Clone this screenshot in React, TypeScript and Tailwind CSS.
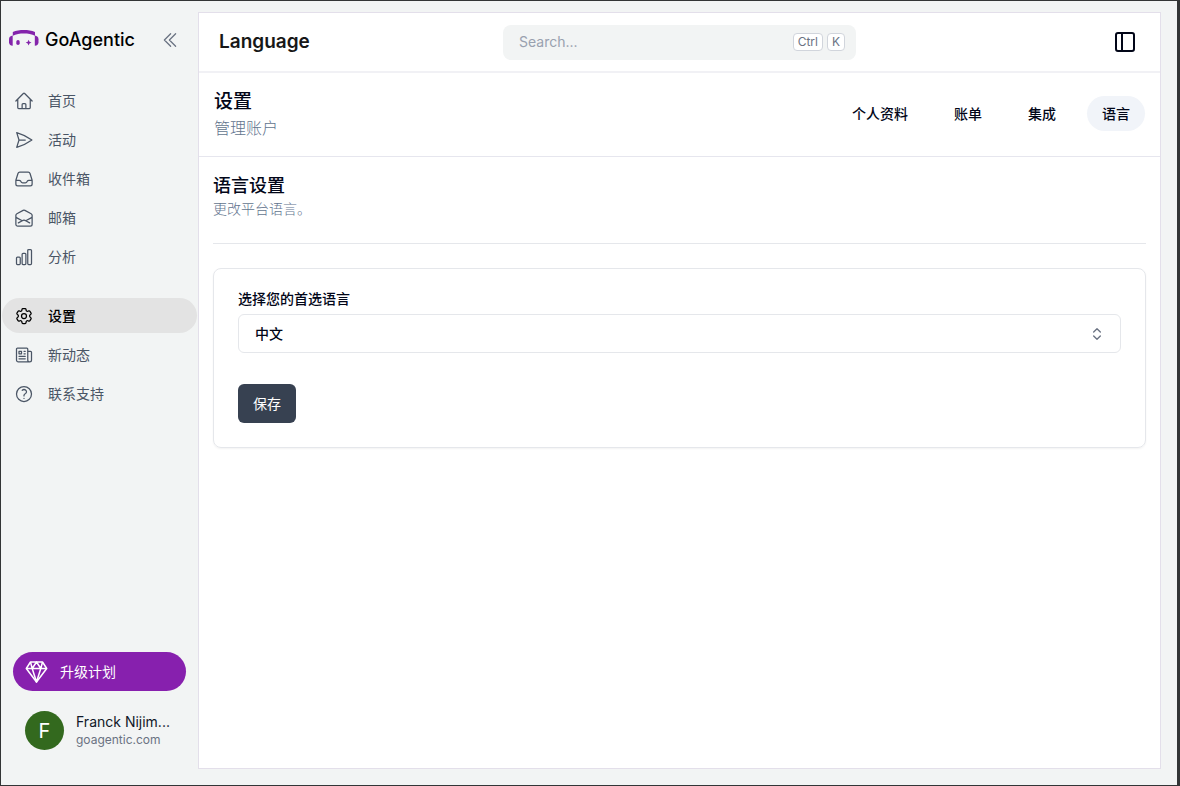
import {
  HiOutlineHome,
  HiOutlinePaperAirplane,
  HiOutlineInbox,
  HiOutlineEnvelopeOpen,
  HiOutlineChartBar,
  HiOutlineCog6Tooth,
  HiOutlineNewspaper,
  HiOutlineQuestionMarkCircle,
  HiOutlineChevronDoubleLeft
} from 'react-icons/hi2';
import { ChevronsUpDown } from 'lucide-react';
import React, { useState } from 'react';

type NavId = 'home' | 'campaigns' | 'inbox' | 'mailboxes' | 'analytics' | 'settings' | 'news' | 'support';

interface NavItem {
  id: NavId;
  icon: React.ComponentType<{ size?: number; className?: string }>;
  label: string;
}

const mainNav: NavItem[] = [
  { id: 'home', icon: HiOutlineHome, label: '首页' },
  { id: 'campaigns', icon: HiOutlinePaperAirplane, label: '活动' },
  { id: 'inbox', icon: HiOutlineInbox, label: '收件箱' },
  { id: 'mailboxes', icon: HiOutlineEnvelopeOpen, label: '邮箱' },
  { id: 'analytics', icon: HiOutlineChartBar, label: '分析' },
];

const secondaryNav: NavItem[] = [
  { id: 'settings', icon: HiOutlineCog6Tooth, label: '设置' },
  { id: 'news', icon: HiOutlineNewspaper, label: '新动态' },
  { id: 'support', icon: HiOutlineQuestionMarkCircle, label: '联系支持' },
];

const tabs = ['个人资料', '账单', '集成', '语言'];

const Logo = () => (
  <svg width="30" height="22" viewBox="0 0 30 22" fill="#8424ab" aria-hidden="true">
    <path d="M3.800 3C7 1.500 11 1 14.900 1s7.900.5 11.100 2v3.700C22.800 5.200 19 4.600 14.900 4.600S7 5.200 3.800 6.700z" />
    <path d="M3.700 6.500v10.300C1.300 16.500 0 15.200 0 13.200v-3c0-2 1.300-3.400 3.700-3.700z" />
    <path d="M25.800 6.500v10.300c2.400-.3 3.700-1.600 3.700-3.600v-3c0-2-1.300-3.400-3.700-3.700z" />
    <rect x="7.300" y="11" width="3.400" height="5" rx="1.700" />
    <path d="M19.600 10.700l.9 2 2 .9-2 .9-.9 2-.9-2-2-.9 2-.9z" />
  </svg>
);

const DiamondIcon = () => (
  <svg width="23" height="24" viewBox="0 0 23 24" fill="none" stroke="currentColor" strokeWidth="1.500" strokeLinejoin="round" aria-hidden="true">
    <path d="M5.500 2h12l4.200 6.500L11.500 22 1.300 8.500z" />
    <path d="M1.300 8.500h20.400M5.500 2l1.700 6.500L11.500 2l4.300 6.500L17.500 2M7.200 8.500L11.500 22l4.300-13.500" />
  </svg>
);

const PanelIcon = () => (
  <svg width="24" height="24" viewBox="0 0 24 24" fill="none" stroke="currentColor" strokeWidth="2" strokeLinejoin="round" aria-hidden="true">
    <rect x="3" y="3" width="18" height="18" rx="2" />
    <path d="M9 3v18" />
  </svg>
);

const Sidebar = () => {
  const [activeView, setActiveView] = useState<NavId>('settings');

  const Item = ({ id, icon: Icon, label }: NavItem) => (
    <button
      onClick={() => setActiveView(id)}
      className={`w-full h-[35px] flex items-center gap-3.5 px-3 rounded-full text-sm ${activeView === id
        ? 'bg-[#e3e3e3] text-black font-medium'
        : 'text-gray-600 hover:bg-gray-200'
        }`}
    >
      <Icon size={20} className="shrink-0" />
      <span>{label}</span>
    </button>
  );

  return (
    <aside className="w-[197px] shrink-0 flex flex-col">
      {/* Brand */}
      <div className="flex items-center justify-between pl-2 pr-[18px] pt-6 h-[54px]">
        <a href="#" className="flex items-center gap-1.5">
          <Logo />
          <span className="text-lg font-medium text-black">GoAgentic</span>
        </a>
        <button aria-label="Collapse sidebar" className="text-gray-500">
          <HiOutlineChevronDoubleLeft size={20} />
        </button>
      </div>

      <nav className="flex-1 mt-7 px-px">
        <div className="space-y-1">
          {mainNav.map(item => (
            <Item key={item.id} {...item} />
          ))}
        </div>
        <div className="mt-6 space-y-1">
          {secondaryNav.map(item => (
            <Item key={item.id} {...item} />
          ))}
        </div>
      </nav>

      <div className="px-3 pb-[35px]">
        <button className="w-full h-[39px] flex items-center gap-3 px-3 rounded-full bg-[#8720ae] text-white text-sm">
          <DiamondIcon />
          <span>升级计划</span>
        </button>

        {/* User info */}
        <div className="mt-5 flex items-center gap-3 px-3">
          <div className="w-[39px] h-[39px] shrink-0 rounded-full bg-[#33691e] text-white text-xl flex items-center justify-center">F</div>
          <div className="whitespace-nowrap">
            <p className="text-sm leading-[18px] text-gray-900">Franck Nijim...</p>
            <p className="text-xs leading-[18px] text-gray-500">goagentic.com</p>
          </div>
        </div>
      </div>
    </aside>
  );
};

const TopBar = () => (
  <header className="h-[60px] shrink-0 flex items-center justify-between pl-5 pr-[23px] border-b-2 border-[#f1f1f5]">
    <h1 className="flex-1 text-[19px] font-semibold text-neutral-900">Language</h1>
    <div className="w-[353px] h-[35px] ml-[3px] flex items-center gap-1 pl-4 pr-[11px] rounded-lg bg-[#f2f4f4]">
      <input
        type="search"
        aria-label="Search"
        placeholder="Search..."
        className="flex-1 min-w-0 bg-transparent text-sm placeholder:text-gray-400 outline-none"
      />
      <kbd className="h-[18px] px-1 flex items-center rounded border border-gray-300 bg-white font-[Inter] text-xs text-gray-500">Ctrl</kbd>
      <kbd className="h-[18px] px-1 flex items-center rounded border border-gray-300 bg-white font-[Inter] text-xs text-gray-500">K</kbd>
    </div>
    <div className="flex-1 flex justify-end">
      <button aria-label="Toggle panel" className="text-slate-950">
        <PanelIcon />
      </button>
    </div>
  </header>
);

const SettingsHeader = () => {
  const [activeTab, setActiveTab] = useState('语言');

  return (
    <div className="h-[84px] flex items-center justify-between px-[15px] pb-0.5 border-b border-[#e6e6ee]">
      <div>
        <h2 className="text-[19px] leading-7 font-medium text-slate-950">设置</h2>
        <p className="text-base leading-6 font-light text-slate-500">管理账户</p>
      </div>
      <nav className="flex gap-4">
        {tabs.map(tab => (
          <button
            key={tab}
            onClick={() => setActiveTab(tab)}
            className={`h-[35px] px-[15px] rounded-full text-sm font-medium text-slate-950 ${activeTab === tab ? 'bg-[#f1f4f9]' : ''}`}
          >
            {tab}
          </button>
        ))}
      </nav>
    </div>
  );
};

const LanguageForm = () => {
  const [language, setLanguage] = useState('zh');

  return (
    <section className="px-3.5 pt-4">
      <h3 className="text-lg leading-[26px] font-medium text-slate-950">语言设置</h3>
      <p className="text-sm leading-5 font-light text-slate-500">更改平台语言。</p>
      <hr className="my-6 border-gray-200" />

      <form
        onSubmit={e => e.preventDefault()}
        className="p-6 pt-5 rounded-lg border border-gray-200 shadow-xs"
      >
        <label htmlFor="language" className="block text-sm leading-5 font-medium text-slate-950">选择您的首选语言</label>
        <div className="relative mt-[5px]">
          <select
            id="language"
            value={language}
            onChange={e => setLanguage(e.target.value)}
            className="w-full h-[39px] px-4 appearance-none rounded-md border border-gray-200 bg-white text-sm font-medium text-slate-950"
          >
            <option value="zh">中文</option>
            <option value="en">English</option>
            <option value="fr">Français</option>
          </select>
          <ChevronsUpDown size={16} className="absolute right-4 top-3 text-gray-500 pointer-events-none" />
        </div>
        <button type="submit" className="mt-[31px] h-[39px] px-[15px] rounded-md bg-[#374151] text-white text-sm">保存</button>
      </form>
    </section>
  );
};

const App = () => (
  <div
    lang="zh-CN"
    className="min-h-screen flex bg-[#f2f4f4] border border-r-3 border-[#333536] font-[Inter,'Noto_Sans_CJK_SC',sans-serif]"
  >
    <Sidebar />
    <main className="flex-1 min-w-0 mt-[11px] mr-4 mb-4 bg-white border border-[#e3dfea]">
      <TopBar />
      <SettingsHeader />
      <LanguageForm />
    </main>
  </div>
);

export default App;
